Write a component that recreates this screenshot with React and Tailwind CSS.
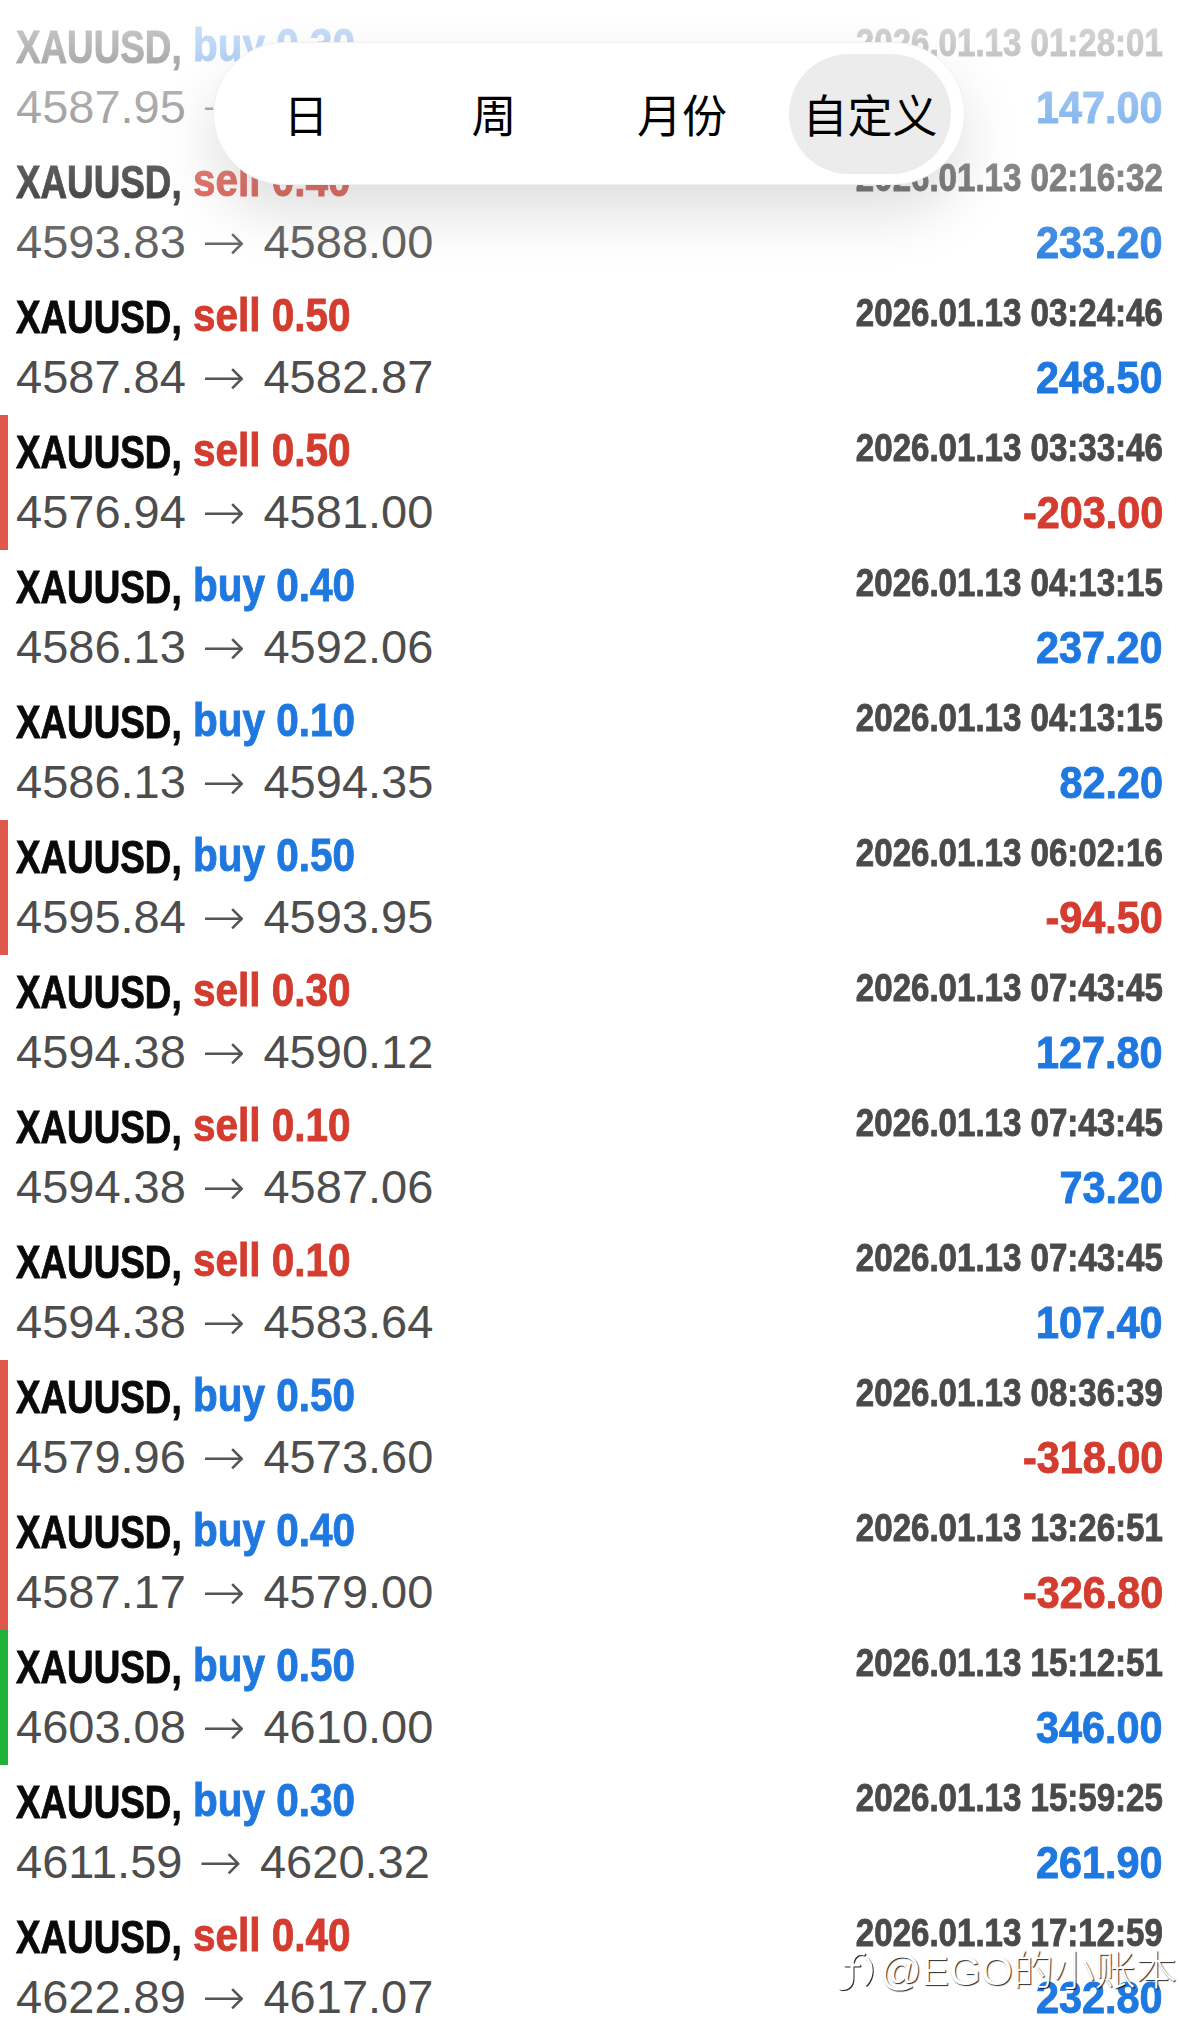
import React from 'react';

const trades = [
  { side: 'buy', lot: '0.30', open: '4587.95', close: '4585.30', time: '2026.01.13 01:28:01', profit: '147.00' },
  { side: 'sell', lot: '0.40', open: '4593.83', close: '4588.00', time: '2026.01.13 02:16:32', profit: '233.20' },
  { side: 'sell', lot: '0.50', open: '4587.84', close: '4582.87', time: '2026.01.13 03:24:46', profit: '248.50' },
  { side: 'sell', lot: '0.50', open: '4576.94', close: '4581.00', time: '2026.01.13 03:33:46', profit: '-203.00', mark: 'red' },
  { side: 'buy', lot: '0.40', open: '4586.13', close: '4592.06', time: '2026.01.13 04:13:15', profit: '237.20' },
  { side: 'buy', lot: '0.10', open: '4586.13', close: '4594.35', time: '2026.01.13 04:13:15', profit: '82.20' },
  { side: 'buy', lot: '0.50', open: '4595.84', close: '4593.95', time: '2026.01.13 06:02:16', profit: '-94.50', mark: 'red' },
  { side: 'sell', lot: '0.30', open: '4594.38', close: '4590.12', time: '2026.01.13 07:43:45', profit: '127.80' },
  { side: 'sell', lot: '0.10', open: '4594.38', close: '4587.06', time: '2026.01.13 07:43:45', profit: '73.20' },
  { side: 'sell', lot: '0.10', open: '4594.38', close: '4583.64', time: '2026.01.13 07:43:45', profit: '107.40' },
  { side: 'buy', lot: '0.50', open: '4579.96', close: '4573.60', time: '2026.01.13 08:36:39', profit: '-318.00', mark: 'red' },
  { side: 'buy', lot: '0.40', open: '4587.17', close: '4579.00', time: '2026.01.13 13:26:51', profit: '-326.80', mark: 'red' },
  { side: 'buy', lot: '0.50', open: '4603.08', close: '4610.00', time: '2026.01.13 15:12:51', profit: '346.00', mark: 'green' },
  { side: 'buy', lot: '0.30', open: '4611.59', close: '4620.32', time: '2026.01.13 15:59:25', profit: '261.90' },
  { side: 'sell', lot: '0.40', open: '4622.89', close: '4617.07', time: '2026.01.13 17:12:59', profit: '232.80' },
];

// condensed bold: Liberation Sans Bold squeezed horizontally, a touch heavier
const cond =
  "font-['Liberation_Sans',sans-serif] font-bold inline-block whitespace-nowrap [-webkit-text-stroke:0.9px_currentColor]";

function TradeRow({ t }) {
  const border =
    t.mark === 'red' ? 'border-[#e0574b]' : t.mark === 'green' ? 'border-[#1fb23a]' : 'border-transparent';
  const sideColor = t.side === 'buy' ? 'text-[#1e78e0]' : 'text-[#d33c2e]';
  const profitColor = t.profit.startsWith('-') ? 'text-[#d33c2e]' : 'text-[#1e78e0]';

  return (
    <div className={`flex h-[135px] justify-between border-l-[8px] pl-[8px] pr-[16px] ${border}`}>
      <div className="flex flex-col pt-[12px]">
        <div className="flex whitespace-nowrap text-[46px] leading-[46px]">
          <span className="inline-block w-[177px]">
            <span className={`${cond} origin-left scale-x-[0.8] text-[#0a0a0a]`}>XAUUSD,</span>
          </span>
          <span className={`${cond} origin-left scale-x-[0.88] ${sideColor}`}>
            {t.side} {t.lot}
          </span>
        </div>
        <div className="mt-[14px] flex items-center whitespace-nowrap font-['Liberation_Sans',sans-serif] text-[47px] leading-[46px] text-[#4d4d4d]">
          <span>{t.open}</span>
          <span className="ml-[16px] mr-[18px] font-['DejaVu_Sans',sans-serif] text-[52px] font-extralight leading-[46px] text-[#555]">
            →
          </span>
          <span>{t.close}</span>
        </div>
      </div>
      <div className="flex flex-col items-end pt-[14px]">
        <div className={`${cond} origin-right scale-x-[0.87] text-[38px] leading-[39px] text-[#4a4a4a]`}>{t.time}</div>
        <div className={`${cond} mt-[23px] origin-right scale-x-[0.94] text-[44px] leading-[44px] ${profitColor}`}>
          {t.profit}
        </div>
      </div>
    </div>
  );
}

function PeriodPicker() {
  const items = ['日', '周', '月份', '自定义'];
  return (
    <div className="absolute left-[213px] top-[42px] flex h-[143px] w-[752px] items-center gap-[26px] rounded-full border border-[#f0f0f0] bg-white pl-[11px] pr-[13px] shadow-[0_28px_60px_rgba(0,0,0,0.13)]">
      {items.map((label, i) => (
        <div
          key={label}
          className={`flex h-[120px] w-[162px] items-center justify-center rounded-full font-['Noto_Sans_CJK_SC',sans-serif] text-[45px] text-black ${
            i === 3 ? 'bg-[#ececec]' : ''
          }`}
        >
          {label}
        </div>
      ))}
    </div>
  );
}

function Watermark() {
  return (
    <div className="absolute left-[836px] top-[1948px] flex items-center gap-[4px] text-white [text-shadow:1px_1px_1px_rgba(0,0,0,0.85)]">
      <svg width="40" height="46" viewBox="0 0 40 46" className="drop-shadow-[1px_1px_0.5px_rgba(0,0,0,0.85)]">
        <path d="M28 6 C20 4 16 10 16 18 L16 30 C16 38 10 42 4 40" fill="none" stroke="white" strokeWidth="3" strokeLinecap="round" />
        <path d="M9 17 L23 17" fill="none" stroke="white" strokeWidth="3" strokeLinecap="round" />
        <path d="M30 10 C37 16 37 28 30 36" fill="none" stroke="white" strokeWidth="3" strokeLinecap="round" />
      </svg>
      <span className="font-['Liberation_Sans','Noto_Sans_CJK_SC',sans-serif] text-[41px] font-light leading-none">@EGO的小账本</span>
    </div>
  );
}

export default function App() {
  return (
    <div className="relative h-[2037px] w-[1179px] overflow-hidden bg-white">
      <div className="pt-[10px]">
        {trades.map((t, i) => (
          <TradeRow key={i} t={t} />
        ))}
      </div>
      {/* fade under the floating picker */}
      <div className="pointer-events-none absolute inset-x-0 top-0 h-[290px] bg-gradient-to-b from-white/85 via-white/40 to-transparent" />
      <PeriodPicker />
      <Watermark />
    </div>
  );
}
